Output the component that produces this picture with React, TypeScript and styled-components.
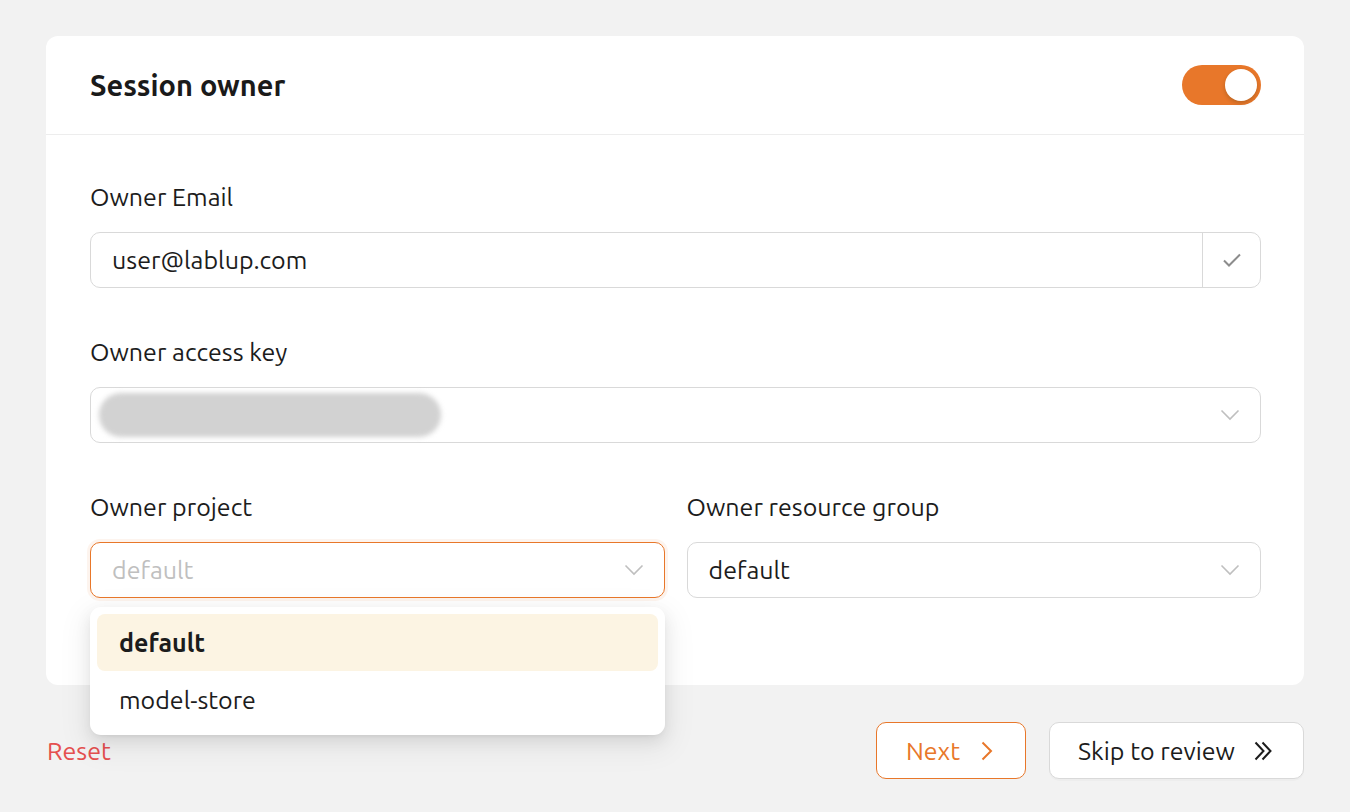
import React from "react";
import styled, { createGlobalStyle, css } from "styled-components";

const GlobalStyle = createGlobalStyle`
  html, body { margin: 0; padding: 0; background: #f2f2f2; }
  body { font-family: "Ubuntu", "Noto Sans", sans-serif; color: rgba(0,0,0,0.88); }
  * { box-sizing: border-box; }
`;

const ORANGE = "#e8772a";

const Page = styled.div`
  min-height: 812px;
  padding: 36px 46px 0 46px;
  background: #f2f2f2;
`;

const Card = styled.section`
  background: #fff;
  border-radius: 12px;
`;

const CardHeader = styled.header`
  height: 99px;
  padding: 0 43px 0 44px;
  display: flex;
  align-items: center;
  justify-content: space-between;
  border-bottom: 1px solid #ededed;
`;

const Title = styled.h2`
  margin: 0;
  font-size: 29px;
  font-weight: 700;
  color: #1a1a1a;
`;

const SwitchTrack = styled.button`
  width: 79px;
  height: 40px;
  border-radius: 20px;
  border: none;
  padding: 4px;
  background: ${ORANGE};
  display: flex;
  justify-content: flex-end;
  align-items: center;
`;

const SwitchKnob = styled.span`
  width: 32px;
  height: 32px;
  border-radius: 50%;
  background: #fff;
  box-shadow: 0 2px 4px rgba(0, 35, 11, 0.2);
`;

const CardBody = styled.div`
  padding: 46px 43px 39px 44px;
`;

const Row = styled.div`
  display: grid;
  grid-template-columns: 1fr 1fr;
  column-gap: 22px;
`;

const FormItem = styled.div`
  position: relative;
  margin-bottom: 48px;
`;

const Label = styled.label`
  display: block;
  font-size: 25px;
  line-height: 32px;
  margin-bottom: 19px;
  color: #1c1c1c;
`;

const fieldBase = css`
  height: 56px;
  border: 1px solid #d9d9d9;
  border-radius: 10px;
  background: #fff;
  font-size: 25px;
  display: flex;
  align-items: center;
`;

const InputGroup = styled.div`
  ${fieldBase};
  overflow: hidden;
`;

const InputText = styled.div`
  flex: 1;
  padding: 0 21px;
  color: #1c1c1c;
`;

const Addon = styled.div`
  width: 58px;
  height: 100%;
  border-left: 1px solid #d9d9d9;
  display: flex;
  align-items: center;
  justify-content: center;
  color: #8c8c8c;
`;

const SelectBox = styled.div<{ $focused?: boolean; $tagged?: boolean }>`
  ${fieldBase};
  padding: 0 20px 0 ${(p) => (p.$tagged ? "8px" : "21px")};
  justify-content: space-between;
  ${(p) =>
    p.$focused &&
    css`
      border-color: ${ORANGE};
      box-shadow: 0 0 0 3px rgba(232, 119, 42, 0.08);
    `}
`;

const SelectValue = styled.span<{ $muted?: boolean }>`
  color: ${(p) => (p.$muted ? "#bfbfbf" : "#1c1c1c")};
`;

const BlurTag = styled.span`
  width: 342px;
  height: 44px;
  border-radius: 22px;
  background: #d2d2d2;
  filter: blur(2.5px);
`;

const Dropdown = styled.div`
  position: absolute;
  left: 0;
  right: 0;
  top: calc(100% + 9px);
  background: #fff;
  border-radius: 11px;
  padding: 7px;
  z-index: 10;
  box-shadow: 0 6px 16px 0 rgba(0, 0, 0, 0.08),
    0 3px 6px -4px rgba(0, 0, 0, 0.12), 0 9px 28px 8px rgba(0, 0, 0, 0.05);
`;

const Option = styled.div<{ $selected?: boolean }>`
  height: 57px;
  border-radius: 8px;
  padding: 0 22px;
  display: flex;
  align-items: center;
  font-size: 25px;
  color: #1c1c1c;
  font-weight: ${(p) => (p.$selected ? 700 : 400)};
  background: ${(p) => (p.$selected ? "#fcf4e3" : "transparent")};
`;

const Footer = styled.div`
  margin-top: 37px;
  display: flex;
  align-items: center;
  justify-content: space-between;
`;

const ResetLink = styled.button`
  border: none;
  background: none;
  padding: 0 0 0 1px;
  font-family: inherit;
  font-size: 25px;
  color: #e5504f;
`;

const Buttons = styled.div`
  display: flex;
  gap: 23px;
`;

const Button = styled.button<{ $primary?: boolean }>`
  height: 57px;
  border-radius: 10px;
  padding: ${(p) => (p.$primary ? "0 32px 0 29px" : "0 30px 0 28px")};
  font-family: inherit;
  font-size: 25px;
  display: flex;
  align-items: center;
  gap: ${(p) => (p.$primary ? "21px" : "19px")};
  background: #fff;
  border: 1px solid ${(p) => (p.$primary ? ORANGE : "#d9d9d9")};
  color: ${(p) => (p.$primary ? ORANGE : "#1c1c1c")};
  box-shadow: ${(p) => (p.$primary ? "none" : "0 2px 0 rgba(0,0,0,0.02)")};
`;

const CheckIcon = () => (
  <svg width="20" height="16" viewBox="0 0 20 16" fill="none">
    <path d="M2 8.5 L7 13.5 L18 2.5" stroke="currentColor" strokeWidth="2" />
  </svg>
);

const Chevron = () => (
  <svg width="20" height="12" viewBox="0 0 20 12" fill="none">
    <path d="M1.5 1.5 L10 10 L18.5 1.5" stroke="#bfbfbf" strokeWidth="1.6" />
  </svg>
);

const RightArrow = () => (
  <svg width="12" height="20" viewBox="0 0 12 20" fill="none">
    <path d="M1.5 1.5 L10 10 L1.5 18.5" stroke="currentColor" strokeWidth="2" />
  </svg>
);

const DoubleRight = () => (
  <svg width="19" height="20" viewBox="0 0 19 20" fill="none">
    <path d="M1.5 1.5 L9.5 10 L1.5 18.5" stroke="currentColor" strokeWidth="2" />
    <path d="M8.5 1.5 L16.5 10 L8.5 18.5" stroke="currentColor" strokeWidth="2" />
  </svg>
);

export default function App() {
  return (
    <Page>
      <GlobalStyle />
      <Card>
        <CardHeader>
          <Title>Session owner</Title>
          <SwitchTrack aria-label="toggle">
            <SwitchKnob />
          </SwitchTrack>
        </CardHeader>
        <CardBody>
          <FormItem>
            <Label>Owner Email</Label>
            <InputGroup>
              <InputText>user@lablup.com</InputText>
              <Addon>
                <CheckIcon />
              </Addon>
            </InputGroup>
          </FormItem>
          <FormItem>
            <Label>Owner access key</Label>
            <SelectBox $tagged>
              <BlurTag />
              <Chevron />
            </SelectBox>
          </FormItem>
          <Row>
            <FormItem>
              <Label>Owner project</Label>
              <SelectBox $focused>
                <SelectValue $muted>default</SelectValue>
                <Chevron />
              </SelectBox>
              <Dropdown>
                <Option $selected>default</Option>
                <Option>model-store</Option>
              </Dropdown>
            </FormItem>
            <FormItem>
              <Label>Owner resource group</Label>
              <SelectBox>
                <SelectValue>default</SelectValue>
                <Chevron />
              </SelectBox>
            </FormItem>
          </Row>
        </CardBody>
      </Card>
      <Footer>
        <ResetLink>Reset</ResetLink>
        <Buttons>
          <Button $primary>
            Next
            <RightArrow />
          </Button>
          <Button>
            Skip to review
            <DoubleRight />
          </Button>
        </Buttons>
      </Footer>
    </Page>
  );
}
